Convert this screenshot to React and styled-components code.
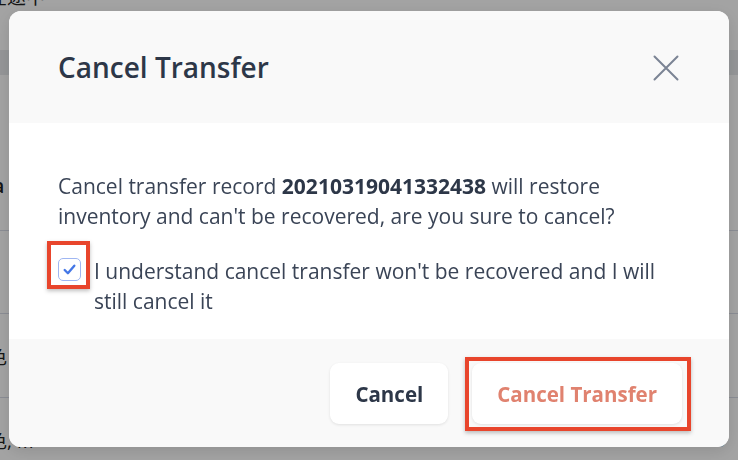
import React, { useState } from 'react'
import styled, { createGlobalStyle } from 'styled-components'

const Global = createGlobalStyle`
    body{
        margin:0;
        font-family:"Open Sans","Noto Sans CJK SC",sans-serif;
        background:#fff;
        overflow:hidden;
    }
`;

const Page = styled.div`
    width:760px;
    height:480px;
    margin:-16px 0 0 -12px;
    color:#222;
    font-size:19px;
`;

const TopCell = styled.div`
    height:66px;
    line-height:26px;
`;

const HeadBand = styled.div`
    height:25px;
    background:#e9ebee;
`;

const Row = styled.div`
    display:flex;
    justify-content:space-between;
    align-items:center;
    height:${(p) => p.h}px;
    border-bottom:1px solid #d9dde8;
    padding-right:22px;
    padding-top:${(p) => p.pt || 0}px;
    box-sizing:border-box;
    font-weight:${(p) => p.bold ? 600 : 400};
`;

const Overlay = styled.div`
    position:fixed;
    inset:0;
    background:rgba(0,0,0,0.36);
    display:flex;
    align-items:center;
    justify-content:center;
    padding-bottom:2px;
`;

const Modal = styled.div`
    width:720px;
    border-radius:12px;
    overflow:hidden;
    background:#fff;
    box-shadow:0 4px 16px rgba(0,0,0,0.12);
    color:#2f3a4c;
`;

const Header = styled.div`
    height:112px;
    background:#f9f9f9;
    display:flex;
    align-items:center;
    justify-content:space-between;
    padding:0 51px 0 49px;
    box-sizing:border-box;
`;

const Title = styled.h2`
    margin:0;
    font-size:28px;
    font-weight:600;
    color:#2d3748;
`;

const CloseBtn = styled.button`
    border:none;
    background:none;
    padding:0;
    width:25px;
    height:25px;
    display:grid;
    place-items:center;
    cursor:pointer;
`;

const Body = styled.div`
    padding:48px 46px 23px 49px;
    font-size:21px;
    line-height:30px;
    color:#3a4456;
    b{
        font-weight:700;
        color:#2d3748;
    }
`;

const Para = styled.p`
    margin:0 0 25px;
`;

const CheckRow = styled.label`
    display:flex;
    align-items:flex-start;
    gap:13px;
    cursor:pointer;
`;

const Marked = styled.div`
    position:relative;
    flex-shrink:0;
    &::after{
        content:"";
        position:absolute;
        top:${(p) => p.t}px;
        right:${(p) => p.r}px;
        bottom:${(p) => p.b}px;
        left:${(p) => p.l}px;
        border:4px solid #e8452c;
        box-shadow:0 2px 4px rgba(0,0,0,0.25);
        pointer-events:none;
    }
`;

const Box = styled.span`
    display:grid;
    place-items:center;
    width:23px;
    height:23px;
    margin-top:2px;
    border:1.5px solid #9fb6f2;
    border-radius:5px;
    box-sizing:border-box;
    background:#fff;
`;

const Footer = styled.div`
    background:#f9f9f9;
    display:flex;
    justify-content:flex-end;
    gap:24px;
    padding:24px 47px 23px 0;
`;

const Button = styled.button`
    height:61px;
    padding:0 25px;
    border:none;
    border-radius:9px;
    background:#fff;
    box-shadow:0 1px 3px rgba(0,0,0,0.10);
    font-family:inherit;
    font-size:20.5px;
    font-weight:700;
    color:${(p) => p.danger ? "#e0826f" : "#2d3748"};
    cursor:pointer;
`;

const App = () => {
    const [checked, setChecked] = useState(true);

    return (
        <>
            <Global />
            <Page>
                <TopCell>在途中</TopCell>
                <HeadBand />
                <Row h={156} pt={66} bold>ia</Row>
                <Row h={83}></Row>
                <Row h={84}>色</Row>
                <Row h={84}>
                    <span>色, M</span>
                    <span>10903919</span>
                </Row>
            </Page>
            <Overlay>
                <Modal>
                    <Header>
                        <Title>Cancel Transfer</Title>
                        <CloseBtn aria-label="close">
                            <svg width="26" height="26" viewBox="0 0 26 26" fill="none" stroke="#7b8494" strokeWidth="2" strokeLinecap="round">
                                <path d="M1.5 1.5 L24.5 24.5 M24.5 1.5 L1.5 24.5" />
                            </svg>
                        </CloseBtn>
                    </Header>
                    <Body>
                        <Para>
                            Cancel transfer record <b>20210319041332438</b> will restore inventory and can't be recovered, are you sure to cancel?
                        </Para>
                        <CheckRow onClick={() => setChecked(!checked)}>
                            <Marked t={-15} r={-9} b={-8} l={-11}>
                                <Box>
                                    {checked && (
                                        <svg width="15" height="15" viewBox="0 0 14 14" fill="none" stroke="#4477e6" strokeWidth="2.2" strokeLinecap="round" strokeLinejoin="round">
                                            <path d="M2.5 7.5 L5.5 10.5 L11.5 3.5" />
                                        </svg>
                                    )}
                                </Box>
                            </Marked>
                            <span>I understand cancel transfer won't be recovered and I will still cancel it</span>
                        </CheckRow>
                    </Body>
                    <Footer>
                        <Button>Cancel</Button>
                        <Marked t={-6} r={-9} b={-7} l={-7}>
                            <Button danger>Cancel Transfer</Button>
                        </Marked>
                    </Footer>
                </Modal>
            </Overlay>
        </>
    )
}

export default App
